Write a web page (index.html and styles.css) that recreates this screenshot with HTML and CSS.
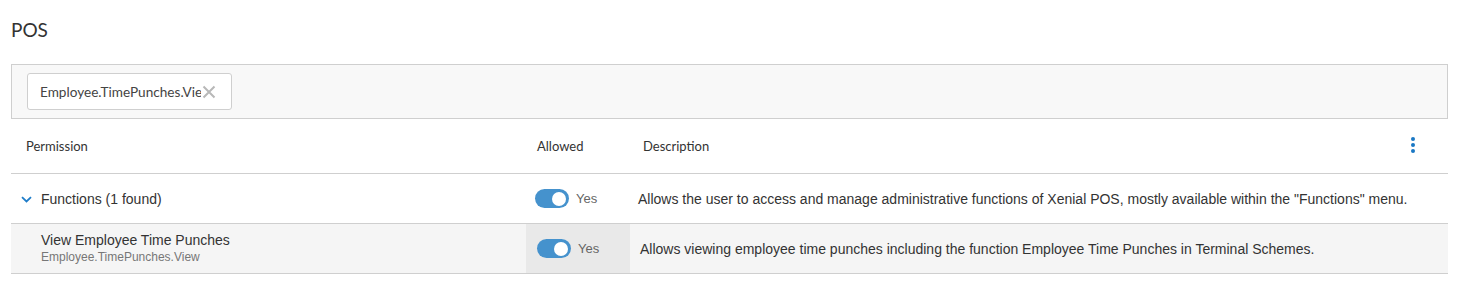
FILE: index.html
```html
<!DOCTYPE html>
<html>
<head>
<meta charset="utf-8">
<link rel="stylesheet" href="styles.css">
</head>
<body>
<div class="page">
  <h1 class="title">POS</h1>
  <div class="filter-bar">
    <div class="chip">
      <span class="chip-text">Employee.TimePunches.View</span>
      <svg class="chip-x" width="14" height="14" viewBox="0 0 14 14"><path d="M1.5 1.5 L12.5 12.5 M12.5 1.5 L1.5 12.5" stroke="#b8b8b8" stroke-width="2" fill="none"/></svg>
    </div>
  </div>
  <div class="table">
    <div class="row head">
      <div class="cell c-perm">Permission</div>
      <div class="cell c-allow">Allowed</div>
      <div class="cell c-desc">Description</div>
      <div class="kebab"><span></span><span></span><span></span></div>
    </div>
    <div class="row group">
      <div class="cell c-perm">
        <svg class="chev" width="11" height="7" viewBox="0 0 11 7"><path d="M1 1.2 L5.5 5.5 L10 1.2" stroke="#1f7dc9" stroke-width="1.8" fill="none"/></svg>
        <span>Functions (1 found)</span>
      </div>
      <div class="cell c-allow"><span class="toggle"><span class="knob"></span></span><span class="yes">Yes</span></div>
      <div class="cell c-desc">Allows the user to access and manage administrative functions of Xenial POS, mostly available within the "Functions" menu.</div>
    </div>
    <div class="row item">
      <div class="cell c-perm">
        <div class="perm-name">View Employee Time Punches</div>
        <div class="perm-key">Employee.TimePunches.View</div>
      </div>
      <div class="cell c-allow"><span class="toggle"><span class="knob"></span></span><span class="yes">Yes</span></div>
      <div class="cell c-desc">Allows viewing employee time punches including the function Employee Time Punches in Terminal Schemes.</div>
    </div>
  </div>
</div>
</body>
</html>
```
FILE: styles.css
```css
* { box-sizing: border-box; }
html, body { margin: 0; padding: 0; background: #fff; }
body { font-family: "Liberation Sans", Arial, sans-serif; color: #333; }
.page { width: 1437px; margin-left: 11px; }
.title {
  font-family: Lato, "Noto Sans", sans-serif;
  font-weight: 400;
  font-size: 19px;
  color: #333;
  margin: 0;
  padding-top: 19px;
  height: 64px;
  line-height: 22px;
}
.filter-bar {
  height: 55px;
  background: #f8f8f8;
  border: 1px solid #cfcfcf;
  padding: 8px 15px;
  display: flex;
  align-items: center;
}
.chip {
  width: 205px;
  height: 37px;
  background: #fff;
  border: 1px solid #cfcfcf;
  border-radius: 3px;
  display: flex;
  align-items: center;
  padding-left: 12px;
  font-family: Lato, "Noto Sans", sans-serif;
  font-size: 13.6px;
  color: #444;
}
.chip-text { width: 161px; overflow: hidden; white-space: nowrap; flex: none; }
.chip-x { flex: none; margin-left: 1px; }
.row {
  display: grid;
  grid-template-columns: 515px 104px 1fr;
  border-bottom: 1px solid #cfcfcf;
  position: relative;
}
.cell { display: flex; align-items: center; }
.head { height: 55px; font-family: Lato, "Noto Sans", sans-serif; font-size: 13px; color: #333; }
.head .c-perm { padding-left: 15px; }
.head .c-allow { padding-left: 11px; }
.head .c-desc { padding-left: 13px; }
.kebab {
  position: absolute;
  right: 33px;
  top: 18px;
  display: flex;
  flex-direction: column;
  gap: 2px;
}
.kebab span { width: 4px; height: 4px; border-radius: 50%; background: #1a78c4; display: block; }
.group { height: 50px; font-size: 14px; }
.group .c-perm { padding-left: 10px; }
.chev { margin-right: 9px; margin-top: 2px; flex: none; }
.group .c-allow { padding-left: 9px; }
.group .c-desc { padding-left: 8px; font-size: 14px; }
.item { height: 50px; background: #f5f5f5; }
.item .c-perm { padding-left: 30px; flex-direction: column; align-items: flex-start; justify-content: center; }
.perm-name { font-size: 14px; color: #333; line-height: 17px; }
.perm-key { font-size: 12px; color: #777; line-height: 15px; margin-top: 1px; }
.item .c-allow { background: #e9e9e9; padding-left: 11px; }
.item .c-desc { padding-left: 10px; font-size: 14px; }
.toggle {
  width: 34px;
  height: 19px;
  border-radius: 10px;
  background: #4592cd;
  position: relative;
  display: inline-block;
  flex: none;
}
.knob {
  position: absolute;
  right: 3px;
  top: 2.5px;
  width: 14px;
  height: 14px;
  border-radius: 50%;
  background: #fff;
}
.yes { margin-left: 7px; font-size: 13px; color: #666; }
```
